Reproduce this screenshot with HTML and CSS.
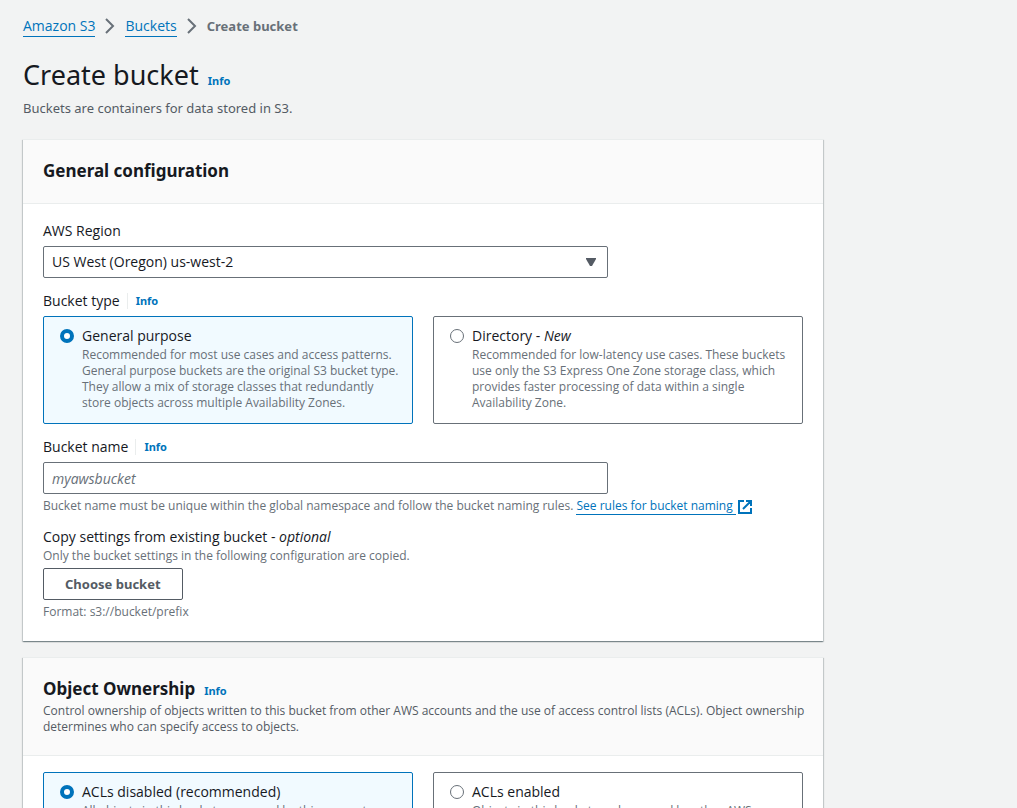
FILE: index.html
```html
<!DOCTYPE html>
<html lang="en">
<head>
<meta charset="utf-8">
<meta name="viewport" content="width=device-width, initial-scale=1">
<title>Create bucket</title>
<link rel="stylesheet" href="styles.css">
</head>
<body>
<main class="page">
  <nav class="breadcrumbs" aria-label="Breadcrumbs">
    <a class="link" href="#">Amazon S3</a>
    <svg class="chevron" viewBox="0 0 16 16" aria-hidden="true"><path d="M4 1l7 7-7 7"/></svg>
    <a class="link" href="#">Buckets</a>
    <svg class="chevron" viewBox="0 0 16 16" aria-hidden="true"><path d="M4 1l7 7-7 7"/></svg>
    <span class="current">Create bucket</span>
  </nav>

  <header class="page-header">
    <div class="heading-row">
      <h1>Create bucket</h1>
      <a class="info" href="#">Info</a>
    </div>
    <p>Buckets are containers for data stored in S3.</p>
  </header>

  <section class="card">
    <header class="card-header">
      <h2>General configuration</h2>
    </header>
    <div class="card-body">
      <div class="field">
        <label class="label" for="region">AWS Region</label>
        <div class="columns">
          <div class="select">
            <select id="region"><option>US West (Oregon) us-west-2</option></select>
            <svg class="caret" viewBox="0 0 10 8" aria-hidden="true"><path d="M0 0h10v1L6 8H4L0 1z"/></svg>
          </div>
        </div>
      </div>

      <div class="field" role="radiogroup" aria-labelledby="type-label">
        <div class="label-row">
          <span class="label" id="type-label">Bucket type</span>
          <a class="info" href="#">Info</a>
        </div>
        <div class="tiles">
          <label class="tile">
            <input type="radio" name="type" checked>
            <span class="tile-text">
              <span class="label">General purpose</span>
              <span class="hint">Recommended for most use cases and access patterns. General purpose buckets are the original S3 bucket type. They allow a mix of storage classes that redundantly store objects across multiple Availability Zones.</span>
            </span>
          </label>
          <label class="tile">
            <input type="radio" name="type">
            <span class="tile-text">
              <span class="label">Directory - <i>New</i></span>
              <span class="hint">Recommended for low-latency use cases. These buckets use only the S3 Express One Zone storage class, which provides faster processing of data within a single Availability Zone.</span>
            </span>
          </label>
        </div>
      </div>

      <div class="field">
        <div class="label-row">
          <label class="label" for="name">Bucket name</label>
          <a class="info" href="#">Info</a>
        </div>
        <div class="columns">
          <input class="text-input" id="name" type="text" placeholder="myawsbucket">
        </div>
        <p class="hint below">Bucket name must be unique within the global namespace and follow the bucket naming rules. <a class="external" href="#"><span class="link">See rules for bucket naming </span><svg class="external-icon" viewBox="0 0 14 14" aria-hidden="true"><path d="M6 1H1v12h12V8M8 1h5v5M13 1L5 9"/></svg></a></p>
      </div>

      <div class="field">
        <label class="label" for="choose">Copy settings from existing bucket - <i>optional</i></label>
        <p class="hint">Only the bucket settings in the following configuration are copied.</p>
        <button class="button" id="choose" type="button">Choose bucket</button>
        <p class="hint below">Format: s3://bucket/prefix</p>
      </div>
    </div>
  </section>

  <section class="card">
    <header class="card-header">
      <div class="heading-row">
        <h2>Object Ownership</h2>
        <a class="info" href="#">Info</a>
      </div>
      <p>Control ownership of objects written to this bucket from other AWS accounts and the use of access control lists (ACLs). Object ownership determines who can specify access to objects.</p>
    </header>
    <div class="card-body">
      <div class="tiles" role="radiogroup" aria-label="Object Ownership">
        <label class="tile">
          <input type="radio" name="acl" checked>
          <span class="tile-text">
            <span class="label">ACLs disabled (recommended)</span>
            <span class="hint">All objects in this bucket are owned by this account. Access to this bucket and its objects is specified using only policies.</span>
          </span>
        </label>
        <label class="tile">
          <input type="radio" name="acl">
          <span class="tile-text">
            <span class="label">ACLs enabled</span>
            <span class="hint">Objects in this bucket can be owned by other AWS accounts. Access to this bucket and its objects can be specified using ACLs.</span>
          </span>
        </label>
      </div>
    </div>
  </section>
</main>
</body>
</html>
```
FILE: styles.css
```css
:root {
  --blue: #0073bb;
  --ink: #16191f;
  --grey: #545b64;
  --muted: #687078;
  --line: #eaeded;
  --display: "Noto Sans", "Open Sans", sans-serif;
}

* { box-sizing: border-box; }

body {
  margin: 0;
  background: #f2f3f3;
  color: var(--ink);
  font: 14px/22px "Open Sans", "Noto Sans", sans-serif;
}

h1, h2, p { margin: 0; }

a { color: var(--blue); text-decoration: none; }

.page {
  max-width: 846px;
  padding: 15px 23px 24px;
}

.link { border-bottom: 1px solid var(--blue); }

.breadcrumbs {
  display: flex;
  align-items: center;
  gap: 7px;
}

.breadcrumbs .link { line-height: 20px; }

.chevron {
  width: 16px;
  height: 16px;
  fill: none;
  stroke: var(--muted);
  stroke-width: 2;
}

.current { color: var(--muted); font: 700 13px/22px var(--display); }

.page-header { margin: 18px 0 20px; }
.page-header p { color: var(--grey); font: 13px/22px var(--display); }
.page-header .heading-row { margin-bottom: 2px; }

.heading-row {
  display: flex;
  align-items: baseline;
  gap: 9px;
}

h1 { font: 400 27px/40px var(--display); }
h2 { margin-bottom: 1px; font: 700 17px/22px var(--display); }

.info { font: 700 11px/16px var(--display); }

.card {
  margin-bottom: 16px;
  border-top: 1px solid var(--line);
  background: #fff;
  box-shadow: 0 1px 1px 0 rgba(0, 28, 36, .3), 1px 1px 1px 0 rgba(0, 28, 36, .15), -1px 1px 1px 0 rgba(0, 28, 36, .15);
}

.card-header {
  padding: 20px 12px 20px 20px;
  border-bottom: 1px solid var(--line);
  background: #fafafa;
}

.card-header p { margin-top: 2px; font-size: 12px; line-height: 16px; color: var(--grey); }

.card-body {
  display: flex;
  flex-direction: column;
  gap: 12px;
  padding: 16px 20px 21px;
}

.label { display: block; }

.field > .label { margin-bottom: 4px; }
.field > .label:has(+ .hint) { margin-bottom: 0; }

.label-row {
  display: flex;
  align-items: center;
  margin-bottom: 4px;
}

.label-row .info {
  margin-left: 7px;
  padding-left: 8px;
  border-left: 1px solid var(--line);
}

.columns {
  display: grid;
  grid-template-columns: repeat(12, 1fr);
  column-gap: 20px;
}

.columns > * { grid-column: span 9; }

.select { display: grid; align-items: center; }

select, .text-input {
  width: 100%;
  height: 32px;
  padding: 0 8px;
  border: 1px solid var(--muted);
  border-radius: 2px;
  background: #fff;
  color: var(--ink);
  font: inherit;
}

select { appearance: none; grid-area: 1 / 1; }

.caret {
  grid-area: 1 / 1;
  justify-self: end;
  width: 10px;
  height: 8px;
  margin-right: 12px;
  fill: var(--grey);
  pointer-events: none;
}

.text-input::placeholder { color: var(--muted); font-style: italic; opacity: 1; }

.hint {
  display: block;
  color: var(--muted);
  font-size: 12px;
  line-height: 16px;
}

.hint.below { margin-top: 4px; }

.external { white-space: pre; }

.external-icon {
  width: 14px;
  height: 14px;
  margin-left: 2px;
  vertical-align: text-bottom;
  fill: none;
  stroke: var(--blue);
  stroke-width: 2;
}

.tiles {
  display: grid;
  grid-template-columns: 1fr 1fr;
  gap: 20px;
}

.tile {
  display: flex;
  align-items: flex-start;
  gap: 8px;
  padding: 8px 8px 12px 16px;
  border: 1px solid var(--muted);
  border-radius: 2px;
}

.tile:has(:checked) { border-color: var(--blue); background: #f1faff; }

.tile input {
  appearance: none;
  flex: none;
  width: 14px;
  height: 14px;
  margin: 4px 0;
  border: 1px solid var(--muted);
  border-radius: 50%;
  background: #fff;
}

.tile input:checked { border: 4px solid var(--blue); }

.button {
  display: block;
  height: 32px;
  margin-top: 4px;
  padding: 0 21px;
  border: 1px solid var(--grey);
  border-radius: 2px;
  background: #fff;
  color: var(--grey);
  font: 700 13px/22px var(--display);
}
```
